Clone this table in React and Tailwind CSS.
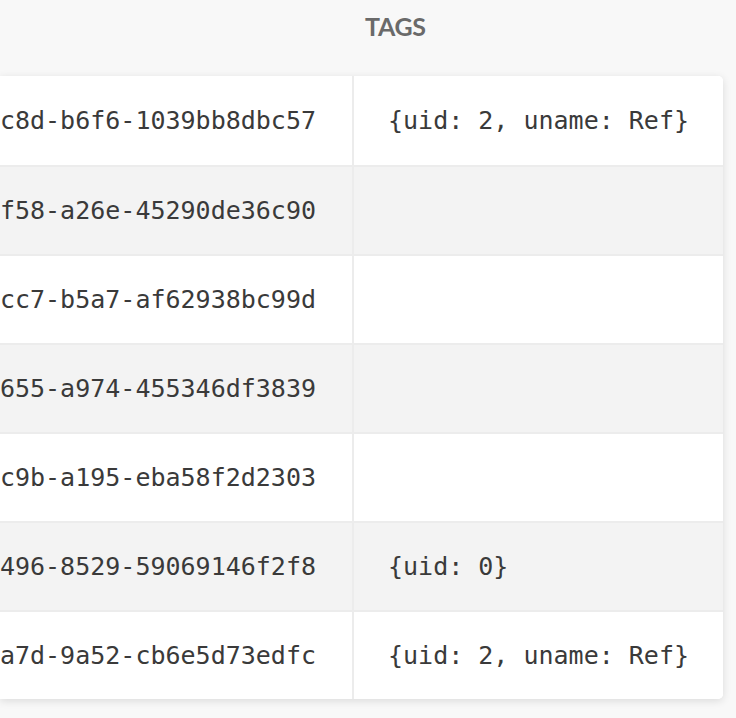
const rows = [
  { id: "5f0e3a21-9c8d-b6f6-1039bb8dbc57", tags: "{uid: 2, uname: Ref}" },
  { id: "a81b7c04-1f58-a26e-45290de36c90", tags: "" },
  { id: "3d92e6f1-8cc7-b5a7-af62938bc99d", tags: "" },
  { id: "c04a1b7e-4655-a974-455346df3839", tags: "" },
  { id: "9e27d5a3-6c9b-a195-eba58f2d2303", tags: "" },
  { id: "71f3c8b2-4496-8529-59069146f2f8", tags: "{uid: 0}" },
  { id: "b6d04e19-2a7d-9a52-cb6e5d73edfc", tags: "{uid: 2, uname: Ref}" },
];

const mono = { fontFamily: '"DejaVu Sans Mono", "Liberation Mono", monospace' };

export default function App() {
  return (
    <div className="w-[736px] h-[718px] overflow-hidden bg-[#f8f8f8]">
      <div className="flex h-[76px]">
        <div className="w-[354px]" />
        <div
          className="pl-[11px] pt-[8px] text-[25px] font-bold text-[#6a6a6a] tracking-[-0.3px]"
          style={{ fontFamily: "Lato, 'Open Sans', sans-serif" }}
        >
          TAGS
        </div>
      </div>
      <div className="w-[723px] rounded-r-[5px] bg-white shadow-[0_2px_8px_rgba(0,0,0,0.12)] overflow-hidden">
        {rows.map((r, i) => (
          <div
            key={r.id}
            className={`flex h-[89px] ${i > 0 ? "border-t-2 border-[#ececec]" : ""} ${
              i % 2 === 1 ? "bg-[#f3f3f3]" : "bg-white"
            }`}
          >
            <div
              className="w-[352px] flex items-center justify-end pr-[36px] overflow-hidden whitespace-nowrap text-[25px] text-[#3a3a3a]"
              style={mono}
            >
              <span className="shrink-0">{r.id}</span>
            </div>
            <div className="w-[2px] bg-[#ececec]" />
            <div
              className="flex-1 flex items-center pl-[34px] whitespace-nowrap text-[25px] text-[#3a3a3a]"
              style={mono}
            >
              {r.tags}
            </div>
          </div>
        ))}
      </div>
    </div>
  );
}
